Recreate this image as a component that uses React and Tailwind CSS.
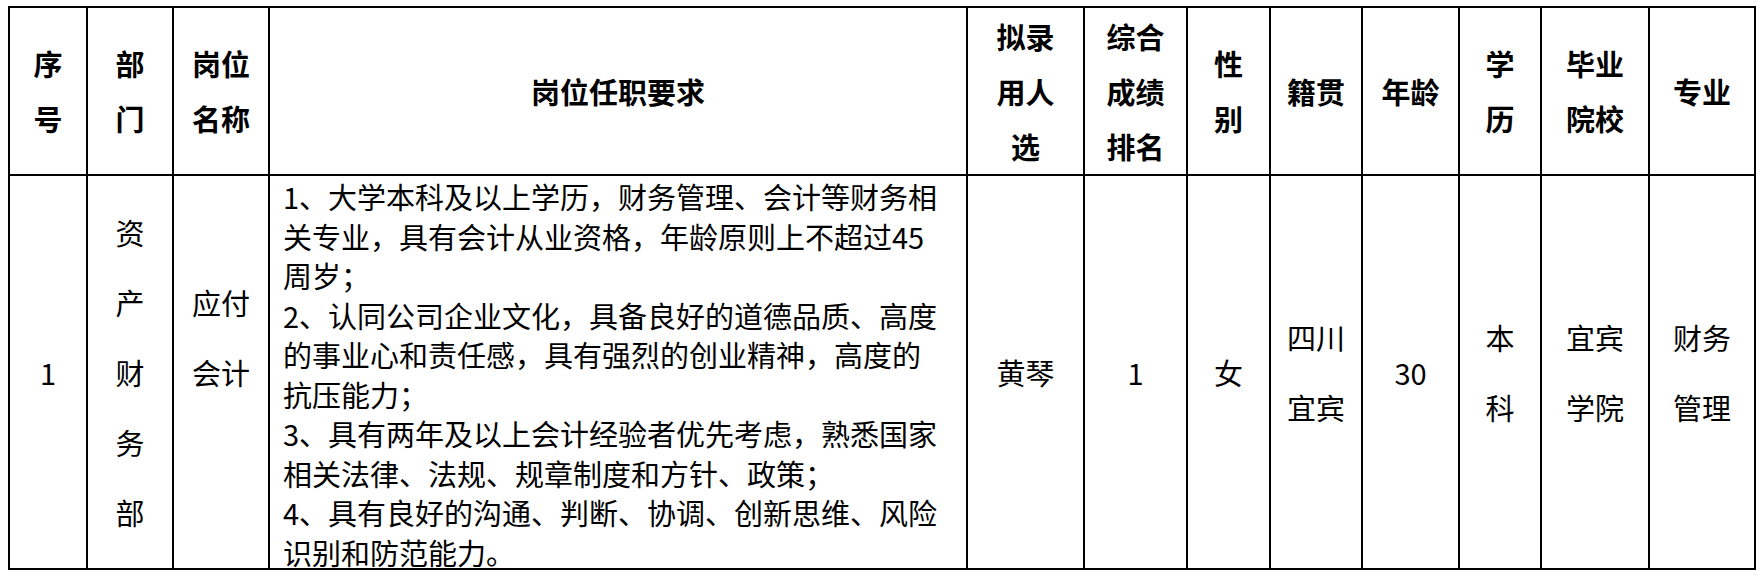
const headers = [
  ['序', '号'],
  ['部', '门'],
  ['岗位', '名称'],
  ['岗位任职要求'],
  ['拟录', '用人', '选'],
  ['综合', '成绩', '排名'],
  ['性', '别'],
  ['籍贯'],
  ['年龄'],
  ['学', '历'],
  ['毕业', '院校'],
  ['专业'],
];

const requirements = [
  '1、大学本科及以上学历，财务管理、会计等财务相',
  '关专业，具有会计从业资格，年龄原则上不超过45',
  '周岁；',
  '2、认同公司企业文化，具备良好的道德品质、高度',
  '的事业心和责任感，具有强烈的创业精神，高度的',
  '抗压能力；',
  '3、具有两年及以上会计经验者优先考虑，熟悉国家',
  '相关法律、法规、规章制度和方针、政策；',
  '4、具有良好的沟通、判断、协调、创新思维、风险',
  '识别和防范能力。',
];

function Lines({ lines }) {
  return lines.map((l, i) => <div key={i}>{l === '' ? '\u00a0' : l}</div>);
}

function Cell({ children }) {
  return (
    <div className="bg-white flex items-center justify-center text-center leading-[70px]">
      <div>{children}</div>
    </div>
  );
}

export default function App() {
  return (
    <div className="min-h-screen bg-white pl-[8px] pt-[6px] text-black text-[29px] font-['Noto_Sans_CJK_SC',sans-serif]">
      <div className="inline-grid grid-cols-[76px_84px_94px_696px_115px_101px_81px_90px_95px_80px_106px_104px] grid-rows-[166px_392px] gap-[2px] border-2 border-black bg-black">
        {/* Header */}
        {headers.map((h, i) => (
          <div key={i} className="bg-white flex items-center justify-center text-center font-bold leading-[55px]">
            <div>
              <Lines lines={h} />
            </div>
          </div>
        ))}

        {/* Row */}
        <Cell>1</Cell>
        <Cell>
          <Lines lines={['资', '产', '财', '务', '部']} />
        </Cell>
        <Cell>
          <Lines lines={['应付', '会计', '']} />
        </Cell>
        <div className="bg-white pl-[13px] pt-[1px] leading-[39.5px] whitespace-nowrap overflow-visible">
          <Lines lines={requirements} />
        </div>
        <Cell>黄琴</Cell>
        <Cell>1</Cell>
        <Cell>女</Cell>
        <Cell>
          <Lines lines={['四川', '宜宾']} />
        </Cell>
        <Cell>30</Cell>
        <Cell>
          <Lines lines={['本', '科']} />
        </Cell>
        <Cell>
          <Lines lines={['宜宾', '学院']} />
        </Cell>
        <Cell>
          <Lines lines={['财务', '管理']} />
        </Cell>
      </div>
    </div>
  );
}
